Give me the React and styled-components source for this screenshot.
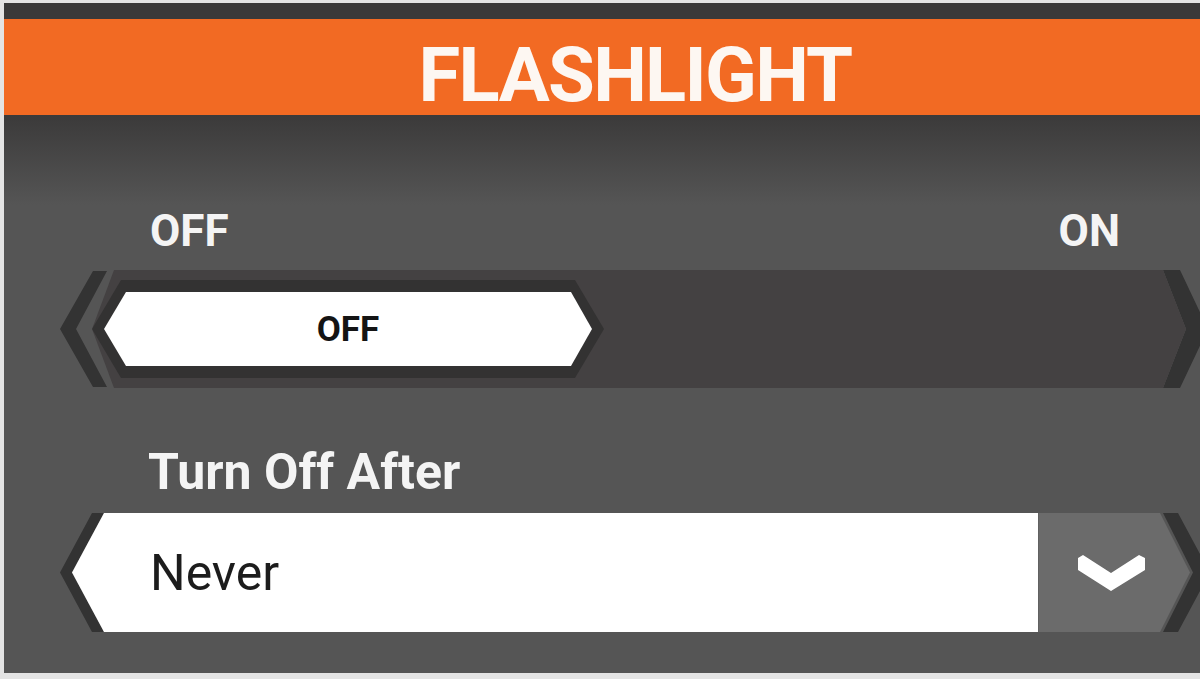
import React, { useState } from "react";
import styled, { createGlobalStyle } from "styled-components";

const GlobalStyle = createGlobalStyle`
  html, body {
    margin: 0;
    padding: 0;
    background: #e4e4e4;
    overflow: hidden;
  }
  body {
    font-family: Roboto, "Liberation Sans", Arial, sans-serif;
  }
`;

const Screen = styled.div`
  margin: 3px 0 0 4px;
  width: 1196px;
  height: 670px;
  display: flex;
  flex-direction: column;
  background: #555555;
`;

const TopBar = styled.div`
  height: 16px;
  background: #3a3939;
`;

const Header = styled.header`
  height: 96px;
  background: #f26a23;
  display: flex;
  align-items: center;
  justify-content: center;
  padding: 15px 0 0 66px;
  box-sizing: border-box;
`;

const Title = styled.h1`
  margin: 0;
  font-size: 76px;
  font-weight: 700;
  letter-spacing: -1.7px;
  color: #fdf7f2;
  line-height: 1;
`;

const Body = styled.main`
  flex: 1;
  background: linear-gradient(#3b3a3a 0, #555555 90px);
  padding-top: 96px;
  display: flex;
  flex-direction: column;
`;

const LabelRow = styled.div`
  display: flex;
  justify-content: space-between;
  padding: 0 80px 0 146px;
  height: 40px;
  align-items: center;
`;

const Label = styled.span`
  font-size: ${(p) => p.size || 44}px;
  font-weight: 700;
  color: #f4f4f4;
  line-height: 1;
`;

const ControlRow = styled.div`
  display: flex;
  height: ${(p) => p.h}px;
  margin-left: 52px;
  margin-top: ${(p) => p.top}px;
`;

const Band = styled.svg`
  flex: none;
  display: block;
  margin-left: ${(p) => p.shift || 0}px;
`;

const Track = styled.div`
  width: 1098px;
  margin-left: -16px;
  background: #444142;
  clip-path: polygon(22px 0, calc(100% - 23px) 0, 100% 50%, calc(100% - 23px) 100%, 22px 100%, 0 50%);
  display: flex;
  align-items: center;
`;

const Knob = styled.button`
  width: 512px;
  height: 98px;
  border: 0;
  padding: 12px;
  background: #333232;
  cursor: pointer;
  display: flex;
  font-family: Roboto, "Liberation Sans", Arial, sans-serif;
  clip-path: polygon(29px 0, calc(100% - 29px) 0, 100% 50%, calc(100% - 29px) 100%, 29px 100%, 0 50%);
`;

const KnobFace = styled.span`
  flex: 1;
  background: #ffffff;
  display: flex;
  align-items: center;
  justify-content: center;
  font-size: 35px;
  font-weight: 700;
  color: #141414;
  clip-path: polygon(22px 0, calc(100% - 21px) 0, 100% 50%, calc(100% - 21px) 100%, 22px 100%, 0 50%);
`;

const SectionLabel = styled.div`
  margin-top: 64px;
  padding-left: 144px;
  height: 40px;
  display: flex;
  align-items: center;
`;

const Field = styled.div`
  width: 970px;
  margin-left: -36px;
  background: #ffffff;
  clip-path: polygon(32px 0, 100% 0, 100% 100%, 32px 100%, 0 50%);
  display: flex;
  align-items: center;
  padding-left: 78px;
  box-sizing: border-box;
  font-size: 50px;
  color: #1c1c1c;
`;

const DropButton = styled.button`
  width: 152px;
  border: 0;
  padding: 0 0 0 36px;
  background: #6b6b6b;
  cursor: pointer;
  display: flex;
  align-items: center;
  clip-path: polygon(0 0, calc(100% - 30px) 0, 100% 50%, calc(100% - 30px) 100%, 0 100%);
`;

const LeftBand = ({ w, h, pts }) => (
  <Band width={w} height={h} viewBox={`0 0 ${w} ${h}`}>
    <polygon points={pts} fill="#333333" />
  </Band>
);

export default function App() {
  const [on, setOn] = useState(false);
  return (
    <>
      <GlobalStyle />
      <Screen>
        <TopBar />
        <Header>
          <Title>FLASHLIGHT</Title>
        </Header>
        <Body>
          <LabelRow>
            <Label>OFF</Label>
            <Label>ON</Label>
          </LabelRow>
          <ControlRow h={118} top={19}>
            <LeftBand w={52} h={118} pts="37,1 51,1 20,59 51,117 37,117 4,59" />
            <Track>
              <Knob onClick={() => setOn(!on)}>
                <KnobFace>{on ? "ON" : "OFF"}</KnobFace>
              </Knob>
            </Track>
            <Band width={40} height={118} viewBox="0 0 40 118" shift={-26}>
              <polygon points="3,0 20,0 48,59 20,118 3,118 26,59" fill="#333333" />
            </Band>
          </ControlRow>
          <SectionLabel>
            <Label size={50}>Turn Off After</Label>
          </SectionLabel>
          <ControlRow h={119} top={21}>
            <LeftBand w={52} h={119} pts="36,0 48,0 16,59.5 48,119 36,119 4,59.5" />
            <Field>Never</Field>
            <DropButton aria-label="Open">
              <svg width="74" height="40" viewBox="0 0 74 40">
                <polygon points="4,5 9,2 37,20 65,2 71,5 71,17 37,38 4,17" fill="#ffffff" />
              </svg>
            </DropButton>
            <Band width={40} height={119} viewBox="0 0 40 119" shift={-30}>
              <polygon points="3,0 18,0 50,59.5 18,119 3,119 33,59.5" fill="#333333" />
            </Band>
          </ControlRow>
        </Body>
      </Screen>
    </>
  );
}
